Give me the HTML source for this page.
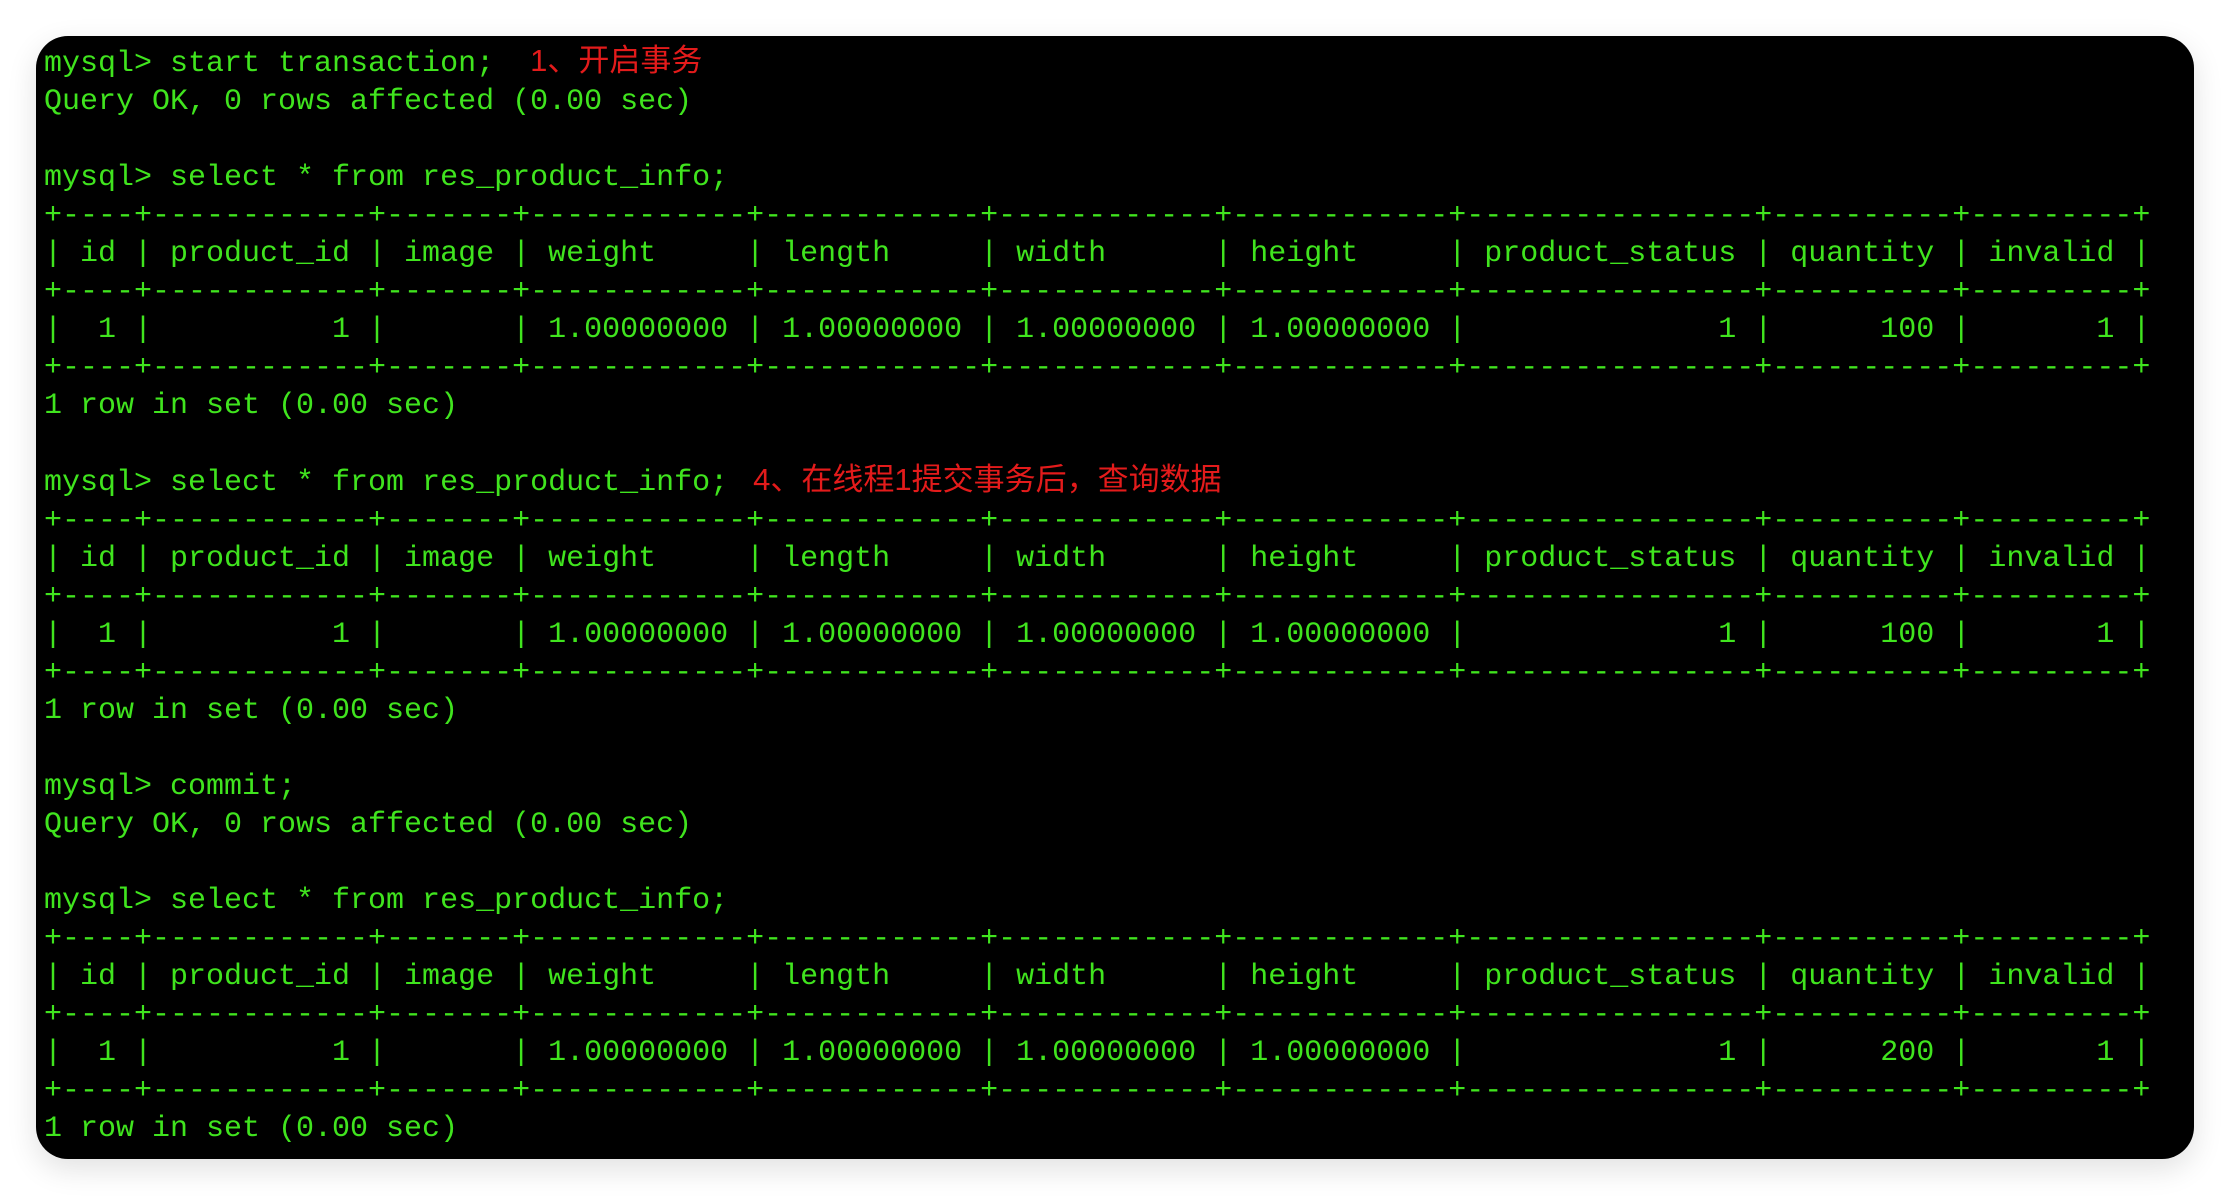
<!DOCTYPE html>
<html><head><meta charset="utf-8"><style>
html,body{margin:0;padding:0;background:#fff;width:2230px;height:1196px;overflow:hidden}
.box{position:absolute;left:36px;top:36px;width:2158px;height:1123px;background:#000;border-radius:32px;box-shadow:0 10px 30px rgba(0,0,0,0.12);overflow:hidden}
pre{position:absolute;left:8px;top:9px;margin:0;font-family:"Liberation Mono",monospace;font-size:30px;line-height:38.05px;color:#40e41e;white-space:pre}
.r{color:#e31b1b;font-family:"Liberation Sans","Noto Sans CJK SC",sans-serif;font-size:31px;line-height:30px}
.r2{margin-left:7px}
</style></head><body><div class="box"><pre>mysql&gt; start transaction;  <span class="r">1、开启事务</span>
Query OK, 0 rows affected (0.00 sec)

mysql&gt; select * from res_product_info;
+----+------------+-------+------------+------------+------------+------------+----------------+----------+---------+
| id | product_id | image | weight     | length     | width      | height     | product_status | quantity | invalid |
+----+------------+-------+------------+------------+------------+------------+----------------+----------+---------+
|  1 |          1 |       | 1.00000000 | 1.00000000 | 1.00000000 | 1.00000000 |              1 |      100 |       1 |
+----+------------+-------+------------+------------+------------+------------+----------------+----------+---------+
1 row in set (0.00 sec)

mysql&gt; select * from res_product_info; <span class="r r2">4、在线程1提交事务后，查询数据</span>
+----+------------+-------+------------+------------+------------+------------+----------------+----------+---------+
| id | product_id | image | weight     | length     | width      | height     | product_status | quantity | invalid |
+----+------------+-------+------------+------------+------------+------------+----------------+----------+---------+
|  1 |          1 |       | 1.00000000 | 1.00000000 | 1.00000000 | 1.00000000 |              1 |      100 |       1 |
+----+------------+-------+------------+------------+------------+------------+----------------+----------+---------+
1 row in set (0.00 sec)

mysql&gt; commit;
Query OK, 0 rows affected (0.00 sec)

mysql&gt; select * from res_product_info;
+----+------------+-------+------------+------------+------------+------------+----------------+----------+---------+
| id | product_id | image | weight     | length     | width      | height     | product_status | quantity | invalid |
+----+------------+-------+------------+------------+------------+------------+----------------+----------+---------+
|  1 |          1 |       | 1.00000000 | 1.00000000 | 1.00000000 | 1.00000000 |              1 |      200 |       1 |
+----+------------+-------+------------+------------+------------+------------+----------------+----------+---------+
1 row in set (0.00 sec)</pre></div></body></html>
